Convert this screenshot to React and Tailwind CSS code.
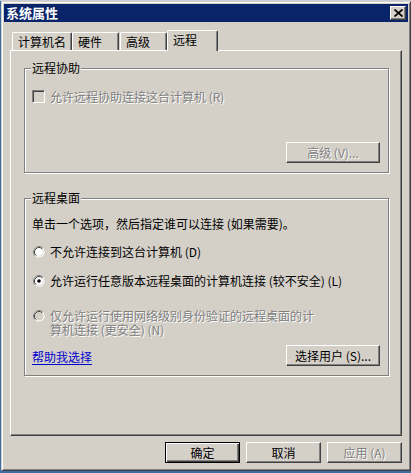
import React from "react";

const raised = "border border-t-white border-l-white border-r-[#404040] border-b-[#404040] shadow-[inset_-1px_-1px_0_#808080]";
const dim = "text-[#808080] [text-shadow:1px_1px_0_#fff]";

function Radio({ checked, disabled }) {
  return (
    <svg width="12" height="12" viewBox="0 0 12 12" className="shrink-0">
      <circle cx="6" cy="6" r="5.5" fill="#fff" />
      <path d="M2.11 9.89 A5.5 5.5 0 0 1 9.89 2.11" stroke="#808080" fill="none" />
      <circle cx="6" cy="6" r="4.5" fill="#d4d0c8" />
      <path d="M2.82 9.18 A4.5 4.5 0 0 1 9.18 2.82" stroke="#404040" fill="none" />
      <circle cx="6" cy="6" r="3.8" fill={disabled ? "#d4d0c8" : "#fff"} />
      {checked && <circle cx="6" cy="6" r="1.8" fill="#000" />}
    </svg>
  );
}

function Btn({ children, disabled, primary, className = "" }) {
  const frame = primary
    ? "border border-black shadow-[inset_1px_1px_0_#fff,inset_-1px_-1px_0_#404040,inset_-2px_-2px_0_#808080]"
    : raised;
  return (
    <div className={`h-[21px] flex items-center justify-center bg-[#d4d0c8] ${frame} ${disabled ? dim : "text-black"} ${className}`}>
      {children}
    </div>
  );
}

function Group({ title, className = "", children }) {
  return (
    <div className={`relative w-[365px] ml-[13px] border border-[#808080] shadow-[inset_1px_1px_0_#fff,1px_1px_0_#fff] ${className}`}>
      <span className="absolute left-[6px] top-[-8px] px-[1px] bg-[#d4d0c8] leading-[14px]">{title}</span>
      {children}
    </div>
  );
}

export default function App() {
  const tabs = [
    { label: "计算机名", w: "w-[60px]" },
    { label: "硬件", w: "w-[47px]" },
    { label: "高级", w: "w-[47px] ml-[1px]" },
  ];
  return (
    <div className="w-[411px] h-[473px] bg-[#3a6ea5] border-t border-t-[#c8ccd4] pl-[1px] overflow-hidden font-['Noto_Sans_CJK_SC',sans-serif] text-[12px] leading-[14px] text-black">
      <div className="w-[410px] h-[470px] bg-[#d4d0c8] border border-t-[#d4d0c8] border-l-[#d4d0c8] border-r-[#404040] border-b-[#404040] shadow-[inset_1px_1px_0_#fff,inset_-1px_-1px_0_#808080] p-[2px] flex flex-col">
        {/* title bar */}
        <div className="h-[18px] bg-[#0a246a] flex items-center justify-between pl-[2px] pr-[2px]">
          <span className="text-white font-bold text-[13px] leading-[14px]">系统属性</span>
          <div className={`w-[16px] h-[14px] bg-[#d4d0c8] ${raised} flex items-center justify-center`}>
            <svg width="9" height="8" viewBox="0 0 9 8">
              <path d="M0.5 0.5 L8.5 7.5 M8.5 0.5 L0.5 7.5" stroke="#000" strokeWidth="1.7" fill="none" />
            </svg>
          </div>
        </div>

        <div className="px-[6px] pt-[8px]">
          {/* tabs */}
          <div className="flex items-end pl-[2px] h-[20px]">
            {tabs.map((t) => (
              <div key={t.label} className={`${t.w} h-[18px] rounded-t-[2px] border border-b-0 border-t-white border-l-white border-r-[#404040] shadow-[inset_-1px_0_0_#808080] pl-[5px] pt-[1px] leading-[16px]`}>
                {t.label}
              </div>
            ))}
            <div className="relative z-10 w-[51px] h-[21px] -mb-[1px] rounded-t-[2px] bg-[#d4d0c8] border border-b-0 border-t-white border-l-white border-r-[#404040] shadow-[inset_-1px_0_0_#808080] pl-[5px] pt-[1px] leading-[16px]">
              远程
            </div>
          </div>

          {/* tab panel */}
          <div className="w-[392px] h-[386px] border border-t-white border-l-white border-r-[#404040] border-b-[#404040] shadow-[inset_-1px_-1px_0_#808080] flex flex-col">
            <Group title="远程协助" className="mt-[17px] h-[105px]">
              <div className="flex items-center gap-[5px] pl-[7px] mt-[21px] h-[13px]">
                <div className="w-[13px] h-[13px] shrink-0 bg-[#d4d0c8] border border-t-[#808080] border-l-[#808080] border-r-white border-b-white shadow-[inset_1px_1px_0_#404040,inset_-1px_-1px_0_#d4d0c8]" />
                <span className={dim}>允许远程协助连接这台计算机 (R)</span>
              </div>
              <div className="flex justify-end pr-[8px] mt-[39px]">
                <Btn disabled className="w-[94px]">高级 (V)...</Btn>
              </div>
            </Group>

            <Group title="远程桌面" className="mt-[25px] h-[178px]">
              <div className="pl-[7px] mt-[18px] h-[14px]">单击一个选项，然后指定谁可以连接 (如果需要)。</div>
              <div className="flex items-center gap-[5px] pl-[8px] mt-[14px] h-[14px]">
                <Radio />
                <span>不允许连接到这台计算机 (D)</span>
              </div>
              <div className="flex items-center gap-[5px] pl-[8px] mt-[15px] h-[14px]">
                <Radio checked />
                <span>允许运行任意版本远程桌面的计算机连接 (较不安全) (L)</span>
              </div>
              <div className="flex items-start gap-[5px] pl-[8px] mt-[21px]">
                <div className="h-[14px] flex items-center">
                  <Radio disabled />
                </div>
                <span className={`${dim} w-[300px]`}>仅允许运行使用网络级别身份验证的远程桌面的计<br />算机连接 (更安全) (N)</span>
              </div>
              <div className="flex items-center justify-between pl-[7px] pr-[8px] mt-[8px]">
                <span className="text-[#0000cc] underline underline-offset-2 mt-[2px]">帮助我选择</span>
                <Btn className="w-[94px]">选择用户 (S)...</Btn>
              </div>
            </Group>
          </div>

          {/* dialog buttons */}
          <div className="flex justify-end gap-[6px] mt-[6px]">
            <Btn primary className="w-[75px]">确定</Btn>
            <Btn className="w-[75px]">取消</Btn>
            <Btn disabled className="w-[75px]">应用 (A)</Btn>
          </div>
        </div>
      </div>
    </div>
  );
}
